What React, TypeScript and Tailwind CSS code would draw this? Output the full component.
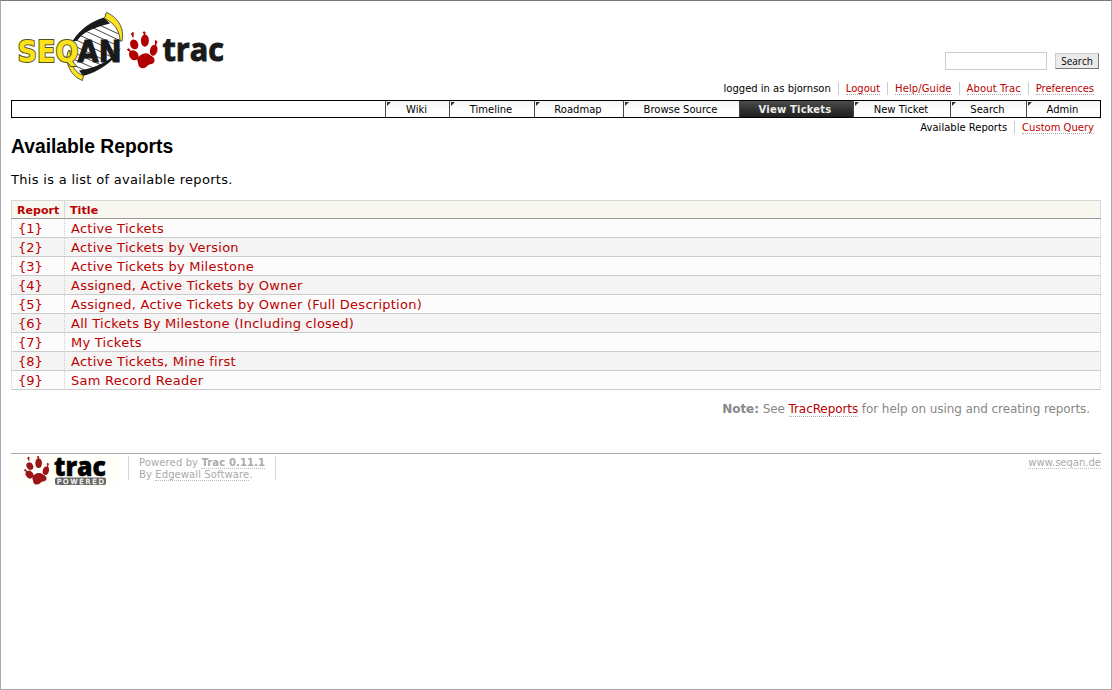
import React from "react";

const link = "border-b border-dotted border-[#aaa] text-[#b00]";

const nav = [
  { label: "Wiki", w: "w-[64px]" },
  { label: "Timeline", w: "w-[85px]" },
  { label: "Roadmap", w: "w-[89px]" },
  { label: "Browse Source", w: "w-[116px]" },
  { label: "View Tickets", w: "w-[114px]", active: true },
  { label: "New Ticket", w: "w-[97px]" },
  { label: "Search", w: "w-[76px]" },
  { label: "Admin", w: "w-[74px]" },
];

const reports = [
  "Active Tickets",
  "Active Tickets by Version",
  "Active Tickets by Milestone",
  "Assigned, Active Tickets by Owner",
  "Assigned, Active Tickets by Owner (Full Description)",
  "All Tickets By Milestone (Including closed)",
  "My Tickets",
  "Active Tickets, Mine first",
  "Sam Record Reader",
];

function Paw() {
  return (
    <g>
      <ellipse cx="10.2" cy="18.4" rx="4" ry="5.1" transform="rotate(-22 10.2 18.4)" />
      <ellipse cx="20.9" cy="14.6" rx="4" ry="6.1" />
      <ellipse cx="29.7" cy="24.3" rx="3.7" ry="5.6" transform="rotate(14 29.7 24.3)" />
      <ellipse cx="9.8" cy="29.3" rx="4.4" ry="5.4" transform="rotate(-38 9.8 29.3)" />
      <path d="M7.4 7.6L9.2 6.4L9 11.2Z M19.2 6.2L21 6L20.8 9.6Z M31.4 14.6L33 15.4L31.6 19.4Z M3.2 23.6L5 22.8L6.8 26Z" strokeWidth="1" stroke="currentColor" />
      <path d="M20.5 27.4C24 26.8 25.5 28.9 28.3 30.6C31.6 32.6 31.2 37.4 27.8 37.9C25.2 38 24.4 38.6 22.2 40.9C19.5 43.2 15 42.3 14.4 38.8C14.1 36 12.8 34.8 13.4 32.4C14.2 30.4 17.3 27.9 20.5 27.4Z" />
    </g>
  );
}

function Logo() {
  return (
    <svg className="block shrink-0" width="229" height="85" viewBox="11 1 229 85">
      <defs>
        <clipPath id="helix">
          <path d="M106 20C92 22 79 32 74 42C66 52 68 64 80 73C96 72 112 60 117 50C122 40 120 28 106 20Z" />
        </clipPath>
      </defs>
      <g clipPath="url(#helix)" stroke="#333" strokeWidth="0.9" fill="none">
        <path d="M93 22L125 37M87 25L125 43M81 29L125 49M77 34L125 56M72 38L120 61M68 43L115 65M66 49L110 69M64 55L105 73M64 61L98 76" />
      </g>
      <path d="M104 17.5C92 21 80 29 72.5 41L77 41C81 34 91 28 110 23.5Z" fill="#1a1a1a" />
      <path d="M119 50C112 59 98 68 79 70.5L83 76C98 72 114 62 121 48Z" fill="#1a1a1a" />
      <path d="M106.3 12.5C116 16 125 27 122 41L120 41C120 32 115 23 104.5 18.5Z" fill="#fce21b" stroke="#444" strokeWidth="0.9" />
      <path d="M69 50C64 58 68 75 82.5 80.5L83.5 75.5C75 73 71 65 72 58Z" fill="#fce21b" stroke="#444" strokeWidth="0.9" />
      <text x="17.5" y="61.5" fontFamily="DejaVu Sans" fontWeight="700" fontSize="29.5" textLength="61" lengthAdjust="spacingAndGlyphs" fill="#fce21b" stroke="#55501c" strokeWidth="2" paintOrder="stroke">SEQ</text>
      <text x="77.5" y="61.5" fontFamily="DejaVu Sans" fontWeight="700" fontSize="29.5" textLength="44" lengthAdjust="spacingAndGlyphs" fill="#1a1a1a" stroke="#1a1a1a" strokeWidth="1">AN</text>
      <g className="text-[#b00000]" fill="currentColor" transform="translate(124 26)">
        <Paw />
      </g>
      <text x="162.5" y="60.5" fontFamily="Open Sans" fontWeight="700" fontSize="32.5" textLength="61.5" lengthAdjust="spacingAndGlyphs" fill="#1a1a1a" stroke="#1a1a1a" strokeWidth="1">trac</text>
    </svg>
  );
}

function PoweredLogo() {
  return (
    <svg className="block shrink-0" width="106" height="33" viewBox="11 454 106 33">
      <rect x="11" y="454" width="106" height="33" fill="#fffffa" />
      <g className="text-[#9b1518]" fill="currentColor" transform="translate(21.5 452) scale(0.82 0.77)">
        <Paw />
      </g>
      <text x="54" y="476" fontFamily="Open Sans" fontWeight="800" fontSize="27" textLength="52" lengthAdjust="spacingAndGlyphs" fill="#000" stroke="#000" strokeWidth="0.5">trac</text>
      <rect x="55" y="477.5" width="51" height="7.5" rx="2" fill="#666" />
      <text x="57" y="484" fontFamily="DejaVu Sans" fontSize="7" textLength="47" lengthAdjust="spacing" fill="#fff" stroke="#fff" strokeWidth="0.3">POWERED</text>
    </svg>
  );
}

export default function App() {
  return (
    <div className="h-[690px] w-[1112px] overflow-hidden border border-[#aaa] border-t-[#777] bg-white px-[10px] font-['DejaVu_Sans',sans-serif] text-[13px] text-black">
      <header className="flex h-[99px] justify-between">
        <Logo />
        <div className="flex flex-col items-end pt-[51px]">
          <form className="flex items-center gap-2 pr-[2px]">
            <input className="h-[18px] w-[102px] border border-[#ccc] bg-white px-1 text-[10px] outline-none" />
            <button type="button" className="flex h-4 w-11 items-center justify-center border border-[#ccc] border-r-[#777] border-b-[#777] bg-[#eaeaea] font-['Open_Sans',sans-serif] text-[10px] leading-none">
              Search
            </button>
          </form>
          <div className="mt-[12px] flex items-center text-[10px] leading-[13px] whitespace-nowrap">
            <span className="pr-[7px]">logged in as bjornson</span>
            <span className="border-l border-[#ccc] px-[7px]"><a className={link}>Logout</a></span>
            <span className="border-l border-[#ccc] px-[7px]"><a className={`${link} tracking-[0.1px]`}>Help/Guide</a></span>
            <span className="border-l border-[#ccc] px-[7px]"><a className={`${link} tracking-[0.1px]`}>About Trac</a></span>
            <span className="border-l border-[#ccc] px-[7px]"><a className={`${link} tracking-[-0.05px]`}>Preferences</a></span>
          </div>
        </div>
      </header>

      <nav className="flex h-[18px] justify-end border border-black text-[10px] leading-[18px]">
        {nav.map((n) => (
          <a
            key={n.label}
            className={
              n.active
                ? `${n.w} shrink-0 border-l border-[#444] bg-linear-to-b from-[#4c4c4a] via-[#333] to-[#20211f] pr-[3px] text-center font-bold tracking-[0.2px] text-[#eee]`
                : `${n.w} relative shrink-0 border-l border-[#444] bg-linear-to-b from-[#f4f4f4] to-white to-60% pr-[2px] text-center`
            }
          >
            {!n.active && (
              <svg className="absolute top-px left-px" width="4" height="4" viewBox="0 0 4 4">
                <path d="M0 0H4L0 4Z" fill="#333" />
              </svg>
            )}
            {n.label}
          </a>
        ))}
      </nav>

      <div className="flex justify-end pt-[3px] text-[10px] leading-[13px]">
        <span className="pr-[7px]">Available Reports</span>
        <span className="border-l border-[#ccc] px-[7px]"><a className={link}>Custom Query</a></span>
      </div>

      <h1 className="mt-[2px] font-['Liberation_Sans',sans-serif] text-[19.3px] leading-[22px] font-bold">Available Reports</h1>
      <p className="mt-[14px] leading-4 tracking-[0.31px]">This is a list of available reports.</p>

      <table className="mt-3 w-full border-separate border-spacing-0 tracking-[0.25px]">
        <thead>
          <tr className="bg-[#f7f7f0] text-left text-[11px] leading-[17px] text-[#b00]">
            <th className="w-[54px] border border-[#d7d7d7] border-b-[#999] py-0 pl-[5px] tracking-[0.05px]"><span className="relative top-px">Report</span></th>
            <th className="border border-l-0 border-[#d7d7d7] border-b-[#999] py-0 pl-[5px] tracking-[0.1px]"><span className="relative top-px">Title</span></th>
          </tr>
        </thead>
        <tbody>
          {reports.map((r, i) => (
            <tr key={r} className="bg-[#fcfcfc] leading-[17px] text-[#b00] even:bg-[#f4f4f4]">
              <td className="border-x border-b border-[#ccc] pt-px pb-0 pl-[6px] [border-left-style:dotted] [border-right-style:dotted] tracking-[0px]">{`{${i + 1}}`}</td>
              <td className="border-r border-b border-[#ccc] pt-px pb-0 pl-[6px] [border-right-style:dotted]">{r}</td>
            </tr>
          ))}
        </tbody>
      </table>

      <p className="mt-[11px] pr-[11px] text-right text-[12px] leading-4 tracking-[-0.08px] text-[#888]">
        <b>Note:</b> See <a className={link}>TracReports</a> for help on using and creating reports.
      </p>

      <footer className="mt-9 flex border-t border-[#aaa] text-[10px] leading-3 text-[#aaa]">
        <PoweredLogo />
        <div className="mt-[2px] ml-[11px] h-6 w-[148px] border-x border-[#d7d7d7] pt-px pl-[10px] whitespace-nowrap">
          <div className="tracking-[0.12px]">Powered by <b className="border-b border-dotted border-[#bbb]">Trac 0.11.1</b></div>
          <div className="tracking-[0.1px]">By <span className="border-b border-dotted border-[#bbb]">Edgewall Software</span>.</div>
        </div>
        <div className="mt-[3px] ml-auto"><span className="border-b border-dotted border-[#bbb]">www.seqan.de</span></div>
      </footer>
    </div>
  );
}
